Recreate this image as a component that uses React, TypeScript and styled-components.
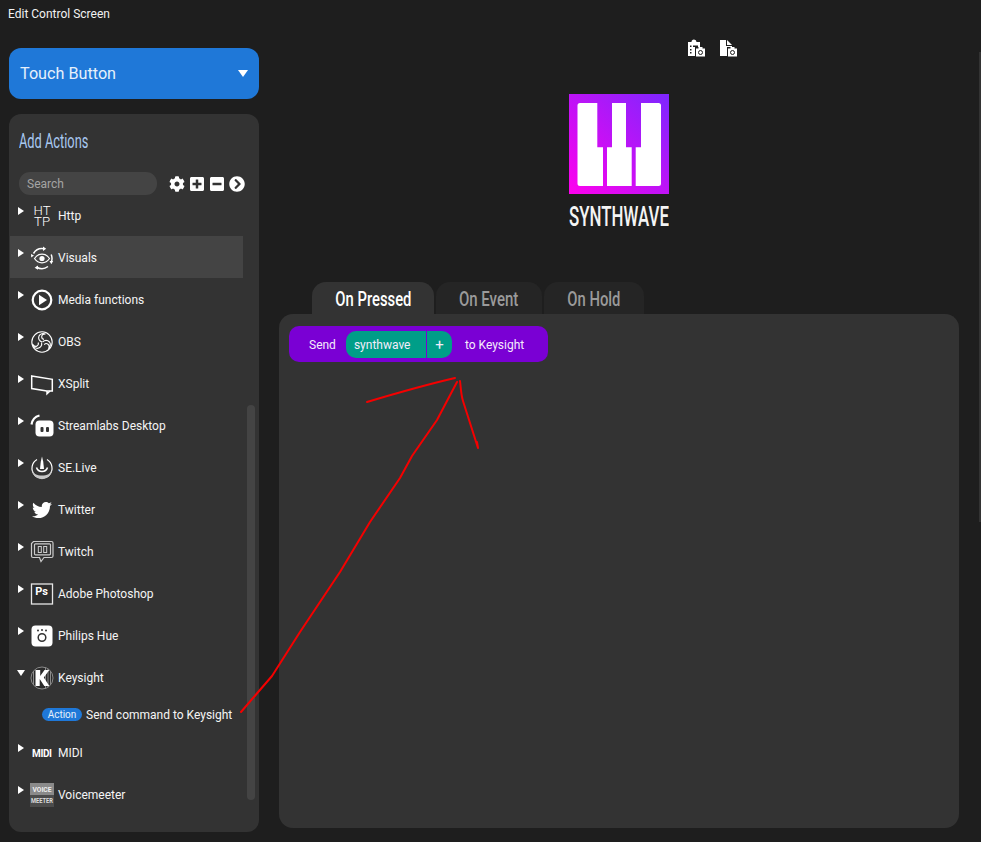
import React from 'react'
import styled, { createGlobalStyle } from 'styled-components'
import { FaCog, FaPlusSquare, FaMinusSquare, FaChevronCircleRight, FaTwitter } from 'react-icons/fa'

const Global = createGlobalStyle`
  html, body { margin:0; padding:0; background:#1e1e1e; }
  body { font-family:Roboto, "Liberation Sans", sans-serif; color:#fff; overflow:hidden; }
  * { box-sizing:border-box; }
`

const Page = styled.div`
  position:relative;
  width:981px;
  height:842px;
  overflow:hidden;
`

const WindowTitle = styled.div`
  height:48px;
  padding:7px 0 0 8px;
  font-size:12px;
  line-height:15px;
  color:#f2f2f2;
`

const Columns = styled.div`
  display:grid;
  grid-template-columns:250px 680px;
  column-gap:20px;
  padding-left:9px;
`

const Side = styled.aside`
  display:flex;
  flex-direction:column;
  gap:15px;
`

const TypeSelect = styled.div`
  height:51px;
  display:flex;
  align-items:center;
  justify-content:space-between;
  padding:0 11px;
  background:#1f78d8;
  border-radius:12px;
  font-size:16.2px;
  color:#e6f0fb;
`

const SelectCaret = styled.span`
  width:0;
  height:0;
  border-left:5.5px solid transparent;
  border-right:5.5px solid transparent;
  border-top:7px solid #fff;
`

const Panel = styled.section`
  position:relative;
  height:718px;
  background:#333;
  border-radius:12px;
  padding-top:15px;
`

const Narrow = styled.span<{ $scale: number; $center?: boolean }>`
  display:inline-block;
  white-space:nowrap;
  transform:scaleX(${p => p.$scale});
  transform-origin:${p => (p.$center ? 'center' : 'left center')};
`

const PanelTitle = styled.h2`
  margin:0 0 18px 10px;
  height:25px;
  font-size:21px;
  line-height:25px;
  font-weight:400;
  color:#a8c8f0;
`

const SearchRow = styled.div`
  display:flex;
  align-items:center;
  margin-left:10px;
  height:23px;
  margin-bottom:-1px;
`

const Search = styled.div`
  width:138px;
  height:23px;
  padding-left:8px;
  border-radius:11px;
  background:#444;
  color:#a4a4a4;
  font-size:12px;
  line-height:25px;
`

const Tools = styled.div`
  display:flex;
  align-items:center;
  gap:4px;
  margin-left:12px;
  color:#fff;
  font-size:16px;
  svg { display:block; }
`

const List = styled.ul`
  list-style:none;
  margin:0 0 0 1px;
  padding:0;
  width:233px;
`

const Row = styled.li<{ $active?: boolean }>`
  display:flex;
  align-items:center;
  height:42px;
  padding-top:2px;
  background:${p => (p.$active ? '#444' : 'transparent')};
  font-size:12px;
  color:#f5f5f5;
  white-space:nowrap;
`

const Caret = styled.span<{ $open?: boolean }>`
  flex:none;
  width:0;
  height:0;
  margin:-11px 6px 0 8px;
  ${p =>
    p.$open
      ? `border-left:4px solid transparent;border-right:4px solid transparent;border-top:6px solid #fff;margin-left:7px;margin-right:5px;`
      : `border-top:4px solid transparent;border-bottom:4px solid transparent;border-left:6px solid #fff;`}
`

const IconBox = styled.span`
  flex:none;
  width:24px;
  height:24px;
  margin-right:4px;
  display:flex;
  align-items:center;
  justify-content:center;
  color:#fff;
  svg { display:block; overflow:visible; }
`

const ActionRow = styled.li`
  display:flex;
  align-items:center;
  height:33px;
  padding-left:32px;
  font-size:12px;
  color:#f5f5f5;
  white-space:nowrap;
`

const ActionBadge = styled.span`
  width:40px;
  height:13px;
  margin-right:4px;
  border-radius:7px;
  background:#1f78d8;
  font-size:10px;
  line-height:13px;
  text-align:center;
  color:#e6f0fb;
`

const ListScroll = styled.div`
  position:absolute;
  left:238px;
  top:291px;
  width:8px;
  height:395px;
  border-radius:4px;
  background:#444;
`

const Main = styled.main`
  display:flex;
  flex-direction:column;
  align-items:center;
`

const TopIcons = styled.div`
  display:flex;
  gap:14px;
  height:18px;
  margin:-9px 0 37px 185px;
  svg { display:block; }
`

const LogoName = styled.div`
  width:100px;
  height:24px;
  margin-top:11px;
  font-size:27px;
  font-weight:500;
  line-height:24px;
  color:#f4f4f4;
`

const Tabs = styled.div`
  align-self:flex-start;
  display:flex;
  gap:2px;
  margin:53px 0 0 33px;
`

const Tab = styled.div<{ $active?: boolean; $w: number }>`
  width:${p => p.$w}px;
  height:32px;
  padding-top:5px;
  border-radius:14px 14px 0 0;
  background:${p => (p.$active ? '#333' : '#252525')};
  color:${p => (p.$active ? '#fff' : '#9a9a9a')};
  font-size:20px;
  font-weight:500;
  line-height:25px;
  display:flex;
  justify-content:center;
`

const Canvas = styled.div`
  width:680px;
  height:514px;
  padding:12px 10px;
  background:#333;
  border-radius:14px;
`

const Block = styled.div`
  display:flex;
  align-items:center;
  width:259px;
  height:36px;
  padding:1px 0 0 20px;
  background:#7a00d4;
  border-radius:10px;
  font-size:12px;
  color:#f4ecfb;
`

const Pill = styled.div`
  display:flex;
  height:27px;
  margin:0 13px 0 10px;
  border-radius:10px;
  overflow:hidden;
  background:#009e88;
  line-height:28px;
`

const PillInput = styled.div`
  width:81px;
  padding-left:8px;
  border-right:1px solid #7a00d4;
`

const PillAdd = styled.div`
  width:25px;
  text-align:center;
  font-size:15px;
`

const Ink = styled.svg`
  position:absolute;
  left:0;
  top:0;
  pointer-events:none;
`

const PageScroll = styled.div`
  position:absolute;
  right:0;
  top:52px;
  width:2px;
  height:470px;
  background:#333;
`

const iconText = { fill: '#fff', fontFamily: 'Roboto, sans-serif' }

const HttpIcon = () => (
  <svg width="24" height="24" viewBox="0 0 24 24">
    <text x="12" y="11" textAnchor="middle" fontSize="13.500" fontWeight="300" textLength="17" lengthAdjust="spacingAndGlyphs" style={iconText}>HT</text>
    <text x="12" y="22" textAnchor="middle" fontSize="13.500" fontWeight="300" textLength="16" lengthAdjust="spacingAndGlyphs" style={iconText}>TP</text>
  </svg>
)

const VisualsIcon = () => (
  <svg width="24" height="24" viewBox="0 0 24 24" fill="none" stroke="#fff">
    <path d="M4.500 12.500c2-3 4.500-4.300 7.500-4.300s5.500 1.300 7.500 4.300c-2 3-4.500 4.300-7.500 4.300s-5.500-1.300-7.500-4.300z" strokeWidth="1.200" />
    <circle cx="12" cy="12.500" r="2.600" fill="#fff" stroke="none" />
    <path d="M3.500 7.500A10 10 0 0 1 14 2.700M21.200 8.500a10 10 0 0 1 .3 7M18 20.500A10 10 0 0 1 6.500 21" strokeWidth="1.500" />
    <path d="M13 .5l3.200 2.300L13 5zM23.200 15l-1.900 3.300-1.800-3.300zM8 23.700l-3.400-2L8 19.500zM1.200 11.500L1 8l3 1.500z" fill="#fff" stroke="none" />
  </svg>
)

const MediaIcon = () => (
  <svg width="24" height="24" viewBox="0 0 24 24">
    <circle cx="12" cy="12" r="9.300" fill="none" stroke="#fff" strokeWidth="2.200" />
    <path d="M9 6.800v10.400l8-5.200z" fill="#fff" />
  </svg>
)

const ObsIcon = () => (
  <svg width="24" height="24" viewBox="0 0 24 24" fill="none" stroke="#fff" strokeWidth="1.100">
    <circle cx="12" cy="12" r="10.200" />
    <path d="M12 12c-3-1-4-3.500-3-6 1-2.200 4-3.300 6.500-2-2 0-3.700 1-3.800 2.800 0 1.700 1.300 2.500 2.300 2.600" />
    <path d="M12.500 12c2.300-2.100 5-2 7 0 1.500 1.900 1.100 5-1 6.800.9-1.800.8-3.800-.8-4.800-1.400-.9-2.800-.1-3.500.7" />
    <path d="M11.600 12.500c.7 3-1 5.200-3.600 5.800-2.400.4-5-1.400-5.500-4.200 1.100 1.700 2.900 2.700 4.500 1.800 1.500-.8 1.500-2.400 1.200-3.400" />
  </svg>
)

const XSplitIcon = () => (
  <svg width="24" height="24" viewBox="0 0 24 24" fill="none" stroke="#fff" strokeWidth="1.500">
    <path d="M1.700 4l20.600 3.300V19h-5.500L1.700 16.500z" />
    <path d="M17 19v2.800l3-2.800" />
  </svg>
)

const StreamlabsIcon = () => (
  <svg width="24" height="24" viewBox="0 0 24 24">
    <path d="M1.500 10.500C2.200 6 4.500 2.800 9.500 1.500" fill="none" stroke="#fff" strokeWidth="2.200" />
    <rect x="5.500" y="6.500" width="18" height="16" rx="4" fill="#fff" />
    <rect x="10.500" y="13" width="3" height="5" rx="1" fill="#333" />
    <rect x="16" y="13" width="3" height="5" rx="1" fill="#333" />
  </svg>
)

const SeLiveIcon = () => (
  <svg width="24" height="24" viewBox="0 0 24 24" fill="none" stroke="#fff">
    <path d="M7 3.500A10 10 0 1 0 17 3.500" strokeWidth="1.200" />
    <path d="M1.800 13A10.200 10.200 0 0 0 22.200 13C21 18 17 19.500 12 19.500S3 18 1.800 13z" fill="#c8c8c8" stroke="none" />
    <path d="M12 .5l1.200 5 .8 7.500h-4l.8-7.500z" fill="#fff" stroke="none" />
    <path d="M6.500 11.500c.8 2.500 3 4 5.500 4s4.700-1.500 5.500-4" strokeWidth="1.500" />
  </svg>
)

const TwitchIcon = () => (
  <svg width="24" height="24" viewBox="0 0 24 24" fill="none" stroke="#ccc" strokeWidth="1.200">
    <path d="M3.500 1.500h18A1.500 1.500 0 0 1 23 3v13a1.500 1.500 0 0 1-1.500 1.500H14l-3 4-1.500-4H3A1.500 1.500 0 0 1 1.500 16V3.500z" />
    <rect x="4.500" y="3.800" width="16" height="11" rx="1" />
    <rect x="8.300" y="6.500" width="3" height="6" strokeWidth="1" />
    <rect x="13.700" y="6.500" width="3" height="6" strokeWidth="1" />
  </svg>
)

const PsIcon = () => (
  <svg width="24" height="24" viewBox="0 0 24 24">
    <rect x="1.500" y="2" width="21" height="20" fill="#2c2c2c" stroke="#e6e6e6" strokeWidth="1.300" />
    <text x="11.500" y="13" textAnchor="middle" fontSize="11" fontWeight="700" style={iconText}>Ps</text>
  </svg>
)

const HueIcon = () => (
  <svg width="24" height="24" viewBox="0 0 24 24">
    <rect x="1.500" y="1.500" width="21" height="21" rx="4" fill="#fff" />
    <circle cx="12" cy="13.500" r="3.800" fill="none" stroke="#333" strokeWidth="1.500" />
    <circle cx="8" cy="6.500" r="1" fill="#333" />
    <circle cx="12" cy="6" r="1" fill="#333" />
    <circle cx="16" cy="6.500" r="1" fill="#333" />
  </svg>
)

const KeysightIcon = () => (
  <svg width="24" height="24" viewBox="0 0 24 24">
    <circle cx="12" cy="12" r="11" fill="#2a2a2a" stroke="#8a8a8a" strokeWidth="1" />
    <path d="M15.500 1.500v21M18 2.500v19M20.500 5v14M3.500 5v14" stroke="#8a8a8a" strokeWidth="1" />
    <path d="M5.500 4h4.700v6L14.500 4h4.800l-5.500 7.500 5.500 8.500h-5l-4.600-7v7H5.500z" fill="#fff" />
  </svg>
)

const MidiIcon = () => (
  <svg width="24" height="24" viewBox="0 0 24 24">
    <text x="12" y="15.500" textAnchor="middle" fontSize="10" fontWeight="700" textLength="20" lengthAdjust="spacing" style={iconText}>MIDI</text>
  </svg>
)

const VoicemeeterIcon = () => (
  <svg width="24" height="24" viewBox="0 0 24 24">
    <rect width="24" height="12" fill="#8a8a8a" />
    <rect y="12" width="24" height="12" fill="#4c4c4c" />
    <text x="12" y="9" textAnchor="middle" fontSize="7" fontWeight="700" textLength="19" lengthAdjust="spacingAndGlyphs" fill="#eee" fontFamily="Roboto, sans-serif">VOICE</text>
    <text x="12" y="20" textAnchor="middle" fontSize="6.500" fontWeight="700" textLength="22" lengthAdjust="spacingAndGlyphs" fill="#ddd" fontFamily="Roboto, sans-serif">MEETER</text>
  </svg>
)

const ClipboardCamIcon = () => (
  <svg width="18" height="18" viewBox="0 0 18 18">
    <path d="M1 3h3.500a2.500 2.500 0 0 1 5 0H13v5H8v9H1z" fill="#fff" />
    <path d="M3 6.500h1.500v1.500H3zM6 6.500h5v1.500H6zM3 10h1.500v1.500H3zM3 13h1.500v1.500H3z" fill="#1e1e1e" />
    <rect x="9" y="9.500" width="9" height="8" fill="#fff" />
    <rect x="11.500" y="8" width="4" height="2" fill="#fff" />
    <circle cx="13.500" cy="13.500" r="2" fill="none" stroke="#1e1e1e" />
  </svg>
)

const FileCamIcon = () => (
  <svg width="18" height="18" viewBox="0 0 18 18">
    <path d="M1 1h6v6h6v1H8v9H1z" fill="#fff" />
    <path d="M8 1l5 5H8z" fill="#fff" />
    <rect x="9" y="9.500" width="9" height="8" fill="#fff" />
    <rect x="11.500" y="8" width="4" height="2" fill="#fff" />
    <circle cx="13.500" cy="13.500" r="2" fill="none" stroke="#1e1e1e" />
  </svg>
)

const PianoLogo = () => (
  <svg width="100" height="100" viewBox="0 0 100 100" style={{ display: 'block' }}>
    <defs>
      <linearGradient id="logoFill" x1="0" y1="1" x2="1" y2="0">
        <stop offset="0" stopColor="#ff00ee" />
        <stop offset="1" stopColor="#7d26ff" />
      </linearGradient>
    </defs>
    <rect width="100" height="100" fill="url(#logoFill)" />
    <path d="M11 9h17.300v44.300H34V92H11a2.500 2.500 0 0 1-2.500-2.500V11.500A2.500 2.500 0 0 1 11 9z" fill="#fff" />
    <path d="M43 9h14v44.300h5.700V92H38V53.300h5z" fill="#fff" />
    <path d="M72 9h17.500a2.500 2.500 0 0 1 2.500 2.500v78a2.500 2.500 0 0 1-2.500 2.500H66.700V53.300H72z" fill="#fff" />
  </svg>
)

const rows = [
  { name: 'Http', Icon: HttpIcon },
  { name: 'Visuals', Icon: VisualsIcon, active: true },
  { name: 'Media functions', Icon: MediaIcon },
  { name: 'OBS', Icon: ObsIcon },
  { name: 'XSplit', Icon: XSplitIcon },
  { name: 'Streamlabs Desktop', Icon: StreamlabsIcon },
  { name: 'SE.Live', Icon: SeLiveIcon },
  { name: 'Twitter', Icon: () => <FaTwitter size={20} /> },
  { name: 'Twitch', Icon: TwitchIcon },
  { name: 'Adobe Photoshop', Icon: PsIcon },
  { name: 'Philips Hue', Icon: HueIcon },
  { name: 'Keysight', Icon: KeysightIcon, open: true },
  { name: 'MIDI', Icon: MidiIcon },
  { name: 'Voicemeeter', Icon: VoicemeeterIcon },
]

const App: React.FC = () => {
  return (
    <Page>
      <Global />
      <WindowTitle>Edit Control Screen</WindowTitle>
      <Columns>
        <Side>
          <TypeSelect>
            Touch Button
            <SelectCaret />
          </TypeSelect>
          <Panel>
            <PanelTitle><Narrow $scale={0.61}>Add Actions</Narrow></PanelTitle>
            <SearchRow>
              <Search>Search</Search>
              <Tools>
                <FaCog size={16} />
                <FaPlusSquare size={16} />
                <FaMinusSquare size={16} />
                <FaChevronCircleRight size={16} />
              </Tools>
            </SearchRow>
            <List>
              {rows.map(({ name, Icon, active, open }) => (
                <React.Fragment key={name}>
                  <Row $active={active}>
                    <Caret $open={open} />
                    <IconBox><Icon /></IconBox>
                    {name}
                  </Row>
                  {open && (
                    <ActionRow>
                      <ActionBadge>Action</ActionBadge>
                      Send command to Keysight
                    </ActionRow>
                  )}
                </React.Fragment>
              ))}
            </List>
            <ListScroll />
          </Panel>
        </Side>
        <Main>
          <TopIcons>
            <ClipboardCamIcon />
            <FileCamIcon />
          </TopIcons>
          <PianoLogo />
          <LogoName><Narrow $scale={0.625}>SYNTHWAVE</Narrow></LogoName>
          <Tabs>
            <Tab $active $w={122}><Narrow $scale={0.74} $center>On Pressed</Narrow></Tab>
            <Tab $w={106}><Narrow $scale={0.75} $center>On Event</Narrow></Tab>
            <Tab $w={100}><Narrow $scale={0.74} $center>On Hold</Narrow></Tab>
          </Tabs>
          <Canvas>
            <Block>
              Send
              <Pill>
                <PillInput>synthwave</PillInput>
                <PillAdd>+</PillAdd>
              </Pill>
              to Keysight
            </Block>
          </Canvas>
        </Main>
      </Columns>
      <PageScroll />
      <Ink width="981" height="842" viewBox="0 0 981 842" fill="none" stroke="#f50000" strokeWidth="2" strokeLinejoin="round" strokeLinecap="round">
        <path d="M367 402c30-9 58-17 88-24" />
        <path d="M241 712L272 676L300 632L340 572L370 522L400 478L412 456L437 420L457 382" />
        <path d="M460 381c1 8 1 14 3 20l15 47-1-6" />
      </Ink>
    </Page>
  )
}

export default App
